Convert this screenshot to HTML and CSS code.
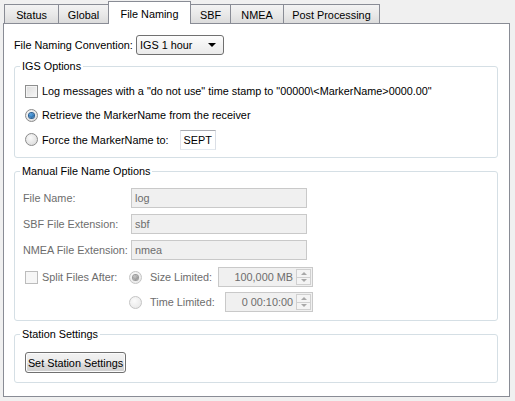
FILE: index.html
```html
<!DOCTYPE html>
<html>
<head>
<meta charset="utf-8">
<link rel="stylesheet" href="styles.css">
</head>
<body>
<div class="tabbar">
  <div class="tab t-status">Status</div>
  <div class="tab t-global">Global</div>
  <div class="tab active t-naming">File Naming</div>
  <div class="tab t-sbf">SBF</div>
  <div class="tab t-nmea">NMEA</div>
  <div class="tab t-post">Post Processing</div>
</div>
<div class="pane">
  <div class="conv-row">
    <span class="conv-label">File Naming Convention:</span>
    <div class="combo"><span>IGS 1 hour</span><span class="arrow"></span></div>
  </div>

  <fieldset class="group">
    <legend>IGS Options</legend>
    <div class="igs-body">
      <div class="opt-row"><span class="check"></span><span>Log messages with a "do not use" time stamp to "00000\&lt;MarkerName&gt;0000.00"</span></div>
      <div class="opt-row"><span class="radio checked"></span><span>Retrieve the MarkerName from the receiver</span></div>
      <div class="opt-row tall"><span class="radio"></span><span>Force the MarkerName to:</span><span class="field marker">SEPT</span></div>
    </div>
  </fieldset>

  <fieldset class="group">
    <legend>Manual File Name Options</legend>
    <div class="manual-body">
      <div class="name-grid">
        <span class="dis">File Name:</span><span class="field disabled">log</span>
        <span class="dis">SBF File Extension:</span><span class="field disabled">sbf</span>
        <span class="dis">NMEA File Extension:</span><span class="field disabled">nmea</span>
      </div>
      <div class="split">
        <div class="split-left"><span class="check disabled"></span><span class="dis">Split Files After:</span></div>
        <div class="split-right">
          <div class="limit-row">
            <span class="radio checked disabled"></span><span class="dis">Size Limited:</span>
            <div class="spin size"><span class="spin-val">100,000 MB</span><span class="spin-btns"><span class="up"></span><span class="down"></span></span></div>
          </div>
          <div class="limit-row">
            <span class="radio disabled"></span><span class="dis">Time Limited:</span>
            <div class="spin time"><span class="spin-val">0 00:10:00</span><span class="spin-btns"><span class="up"></span><span class="down"></span></span></div>
          </div>
        </div>
      </div>
    </div>
  </fieldset>

  <fieldset class="group">
    <legend>Station Settings</legend>
    <div class="station-body">
      <button class="btn">Set Station Settings</button>
    </div>
  </fieldset>
</div>
</body>
</html>
```

FILE: styles.css
```css
html, body {
  margin: 0;
  padding: 0;
}
body {
  background: #f0f0f0;
  font-family: "Liberation Sans", Arial, sans-serif;
  font-size: 10.85px;
  color: #000;
  width: 515px;
  height: 401px;
  overflow: hidden;
}

/* tabs */
.tabbar {
  display: flex;
  align-items: flex-end;
  height: 23px;
  padding-left: 4px;
  box-sizing: border-box;
}
.tab {
  box-sizing: border-box;
  height: 19px;
  padding-top: 2px;
  line-height: 16px;
  text-align: center;
  border: 1px solid #898c95;
  border-bottom: none;
  background: linear-gradient(#f3f3f3, #e9e9e9 50%, #dcdcdc);
  margin-left: -1px;
  white-space: nowrap;
}
.tab:first-child { margin-left: 0; }
.tab.active {
  height: 23px;
  margin-bottom: -1px;
  padding-top: 4px;
  background: #fff;
  position: relative;
  z-index: 1;
}
.t-status { width: 55px; }
.t-global { width: 51px; }
.t-naming { width: 83px; }
.t-sbf { width: 41px; }
.t-nmea { width: 54px; }
.t-post { width: 97px; }

.pane {
  box-sizing: border-box;
  margin-left: 3px;
  width: 507px;
  height: 374px;
  border: 1px solid #898c95;
  background: #fff;
  padding: 0 11px 0 10px;
}

/* convention row */
.conv-row {
  display: flex;
  align-items: center;
  margin-top: 11px;
  height: 20px;
}
.conv-label {
  width: 122px;
}
.combo {
  box-sizing: border-box;
  width: 88px;
  height: 20px;
  border: 1px solid #707070;
  border-radius: 3px;
  background: linear-gradient(#fdfdfd, #f3f3f3 50%, #ebebeb);
  display: flex;
  align-items: center;
  justify-content: space-between;
  padding: 0 7px 0 3px;
}
.arrow {
  width: 0;
  height: 0;
  border-left: 4px solid transparent;
  border-right: 4px solid transparent;
  border-top: 4px solid #000;
}

/* group boxes */
.group {
  margin: 4px 0 0 0;
  padding: 0;
  border: 1px solid #d5dfe5;
  border-radius: 3px;
  min-width: 0;
}
.group + .group { margin-top: 6px; }
.group legend {
  padding: 0 2px;
  margin-left: 5px;
  line-height: 15px;
}

.igs-body {
  padding: 5px 0 5px 10px;
}
.opt-row {
  display: flex;
  align-items: center;
  height: 24px;
}
.opt-row.tall { height: 25px; }
.opt-row .check, .opt-row .radio { margin-right: 4px; }

.check {
  box-sizing: border-box;
  width: 13px;
  height: 13px;
  border: 1px solid #8e8f8f;
  background: linear-gradient(135deg, #dcdcdc, #f8f8f8);
  box-shadow: inset 0 0 0 1px #f4f4f4;
  flex: none;
}
.check.disabled {
  border-color: #bcbcbc;
  background: #f6f6f6;
  box-shadow: none;
}

.radio {
  box-sizing: border-box;
  width: 13px;
  height: 13px;
  border-radius: 50%;
  border: 1px solid #8b8b8b;
  background: radial-gradient(circle at 40% 35%, #fafafa, #d6d6d6);
  flex: none;
  display: flex;
  align-items: center;
  justify-content: center;
}
.radio.checked::after {
  content: "";
  width: 5px;
  height: 5px;
  border-radius: 50%;
  background: radial-gradient(circle at 40% 35%, #5aa8e8, #104f8c);
  box-shadow: 0 0 0 1px #2a5f93;
}
.radio.disabled {
  border-color: #c4c4c4;
  background: radial-gradient(circle at 40% 35%, #fbfbfb, #e4e4e4);
}
.radio.checked.disabled::after {
  background: radial-gradient(circle at 40% 35%, #c8c8c8, #7d7d7d);
  box-shadow: 0 0 0 1px #9a9a9a;
}

.field {
  box-sizing: border-box;
  height: 20px;
  line-height: 18px;
  border: 1px solid #abadb3;
  border-color: #abadb3 #dbdfe6 #e3e9ef #e2e3ea;
  background: #fff;
  padding: 0 3px;
}
.field.marker {
  width: 36px;
  margin-left: 11px;
}
.field.disabled {
  background: #f0f0f0;
  border: 1px solid #c9c9c9;
  color: #6d6d6d;
}

.dis { color: #6d6d6d; }

.manual-body {
  padding: 9px 0 8px 8px;
}
.name-grid {
  display: grid;
  grid-template-columns: 108px 176px;
  grid-auto-rows: 20px;
  row-gap: 6px;
  align-items: center;
}
.split {
  display: flex;
  margin-top: 7px;
}
.split-left {
  display: flex;
  align-items: center;
  gap: 4px;
  width: 106px;
  height: 20px;
  padding-left: 2px;
  box-sizing: border-box;
}
.split-right {
  width: 184px;
  display: flex;
  flex-direction: column;
  gap: 5px;
}
.limit-row {
  display: flex;
  align-items: center;
  height: 20px;
}
.limit-row .radio { margin-right: 8px; }
.spin {
  box-sizing: border-box;
  margin-left: auto;
  height: 20px;
  border: 1px solid #c9c9c9;
  background: #f0f0f0;
  display: flex;
  align-items: center;
  color: #6d6d6d;
  padding-right: 1px;
}
.spin.size { width: 95px; }
.spin.time { width: 88px; }
.spin-val {
  flex: 1;
  text-align: right;
  padding-right: 3px;
}
.spin-btns {
  display: flex;
  flex-direction: column;
  width: 15px;
  height: 16px;
}
.spin-btns span {
  box-sizing: border-box;
  flex: 1;
  border: 1px solid #d0d0d0;
  background: #f4f4f4;
  display: flex;
  align-items: center;
  justify-content: center;
}
.spin-btns .up { border-bottom: none; }
.spin-btns .up::after {
  content: "";
  border-left: 3px solid transparent;
  border-right: 3px solid transparent;
  border-bottom: 3px solid #a8a8a8;
}
.spin-btns .down::after {
  content: "";
  border-left: 3px solid transparent;
  border-right: 3px solid transparent;
  border-top: 3px solid #a8a8a8;
}

.station-body {
  padding: 10px 0 9px 10px;
}
.btn {
  box-sizing: border-box;
  height: 21px;
  width: 101px;
  padding: 0;
  font-family: "Liberation Sans", Arial, sans-serif;
  font-size: 10.85px;
  color: #000;
  border: 1px solid #707070;
  border-radius: 3px;
  background: linear-gradient(#f2f2f2, #ebebeb 50%, #dddddd 50%, #cfcfcf);
  box-shadow: inset 0 0 0 1px #fbfbfb;
  display: block;
}
```
